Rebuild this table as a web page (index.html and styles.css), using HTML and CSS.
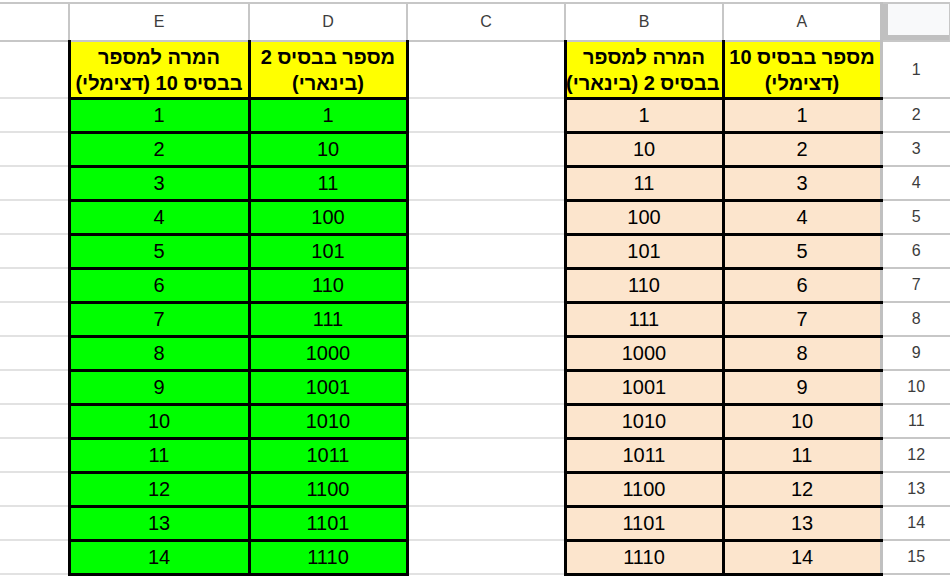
FILE: index.html
```html
<!DOCTYPE html>
<html lang="he">
<head>
<meta charset="utf-8">
<title>Sheet</title>
<link rel="stylesheet" href="styles.css">
</head>
<body>
<table class="sheet">
<colgroup>
<col class="w-f"><col class="w-e"><col class="w-d"><col class="w-c"><col class="w-b"><col class="w-a"><col class="w-rn">
</colgroup>
<thead>
<tr class="hdr">
<th class="ch first"></th><th class="ch">E</th><th class="ch">D</th><th class="ch">C</th><th class="ch">B</th><th class="ch">A</th><th class="corner"></th>
</tr>
</thead>
<tbody>
<tr class="r1">
<td class="first"></td>
<td class="t g title">המרה למספר<br>בבסיס 10 (דצימלי)</td>
<td class="t g title">מספר בבסיס 2<br>(בינארי)</td>
<td></td>
<td class="t p title">המרה למספר<br>בבסיס 2 (בינארי)</td>
<td class="t p title last">מספר בבסיס 10<br>(דצימלי)</td>
<td class="rn">1</td>
</tr>
<tr><td class="first"></td><td class="t g">1</td><td class="t g">1</td><td></td><td class="t p">1</td><td class="t p last">1</td><td class="rn">2</td></tr>
<tr><td class="first"></td><td class="t g">2</td><td class="t g">10</td><td></td><td class="t p">10</td><td class="t p last">2</td><td class="rn">3</td></tr>
<tr><td class="first"></td><td class="t g">3</td><td class="t g">11</td><td></td><td class="t p">11</td><td class="t p last">3</td><td class="rn">4</td></tr>
<tr><td class="first"></td><td class="t g">4</td><td class="t g">100</td><td></td><td class="t p">100</td><td class="t p last">4</td><td class="rn">5</td></tr>
<tr><td class="first"></td><td class="t g">5</td><td class="t g">101</td><td></td><td class="t p">101</td><td class="t p last">5</td><td class="rn">6</td></tr>
<tr><td class="first"></td><td class="t g">6</td><td class="t g">110</td><td></td><td class="t p">110</td><td class="t p last">6</td><td class="rn">7</td></tr>
<tr><td class="first"></td><td class="t g">7</td><td class="t g">111</td><td></td><td class="t p">111</td><td class="t p last">7</td><td class="rn">8</td></tr>
<tr><td class="first"></td><td class="t g">8</td><td class="t g">1000</td><td></td><td class="t p">1000</td><td class="t p last">8</td><td class="rn">9</td></tr>
<tr><td class="first"></td><td class="t g">9</td><td class="t g">1001</td><td></td><td class="t p">1001</td><td class="t p last">9</td><td class="rn">10</td></tr>
<tr><td class="first"></td><td class="t g">10</td><td class="t g">1010</td><td></td><td class="t p">1010</td><td class="t p last">10</td><td class="rn">11</td></tr>
<tr><td class="first"></td><td class="t g">11</td><td class="t g">1011</td><td></td><td class="t p">1011</td><td class="t p last">11</td><td class="rn">12</td></tr>
<tr><td class="first"></td><td class="t g">12</td><td class="t g">1100</td><td></td><td class="t p">1100</td><td class="t p last">12</td><td class="rn">13</td></tr>
<tr><td class="first"></td><td class="t g">13</td><td class="t g">1101</td><td></td><td class="t p">1101</td><td class="t p last">13</td><td class="rn">14</td></tr>
<tr><td class="first"></td><td class="t g">14</td><td class="t g">1110</td><td></td><td class="t p">1110</td><td class="t p last">14</td><td class="rn">15</td></tr>
</tbody>
</table>
</body>
</html>
```

FILE: styles.css
```css
html, body {
  margin: 0;
  padding: 0;
  background: #ffffff;
}

body {
  padding-top: 2px;
  overflow: hidden;
}

.sheet {
  border-collapse: collapse;
  table-layout: fixed;
  width: 950px;
  font-family: "Liberation Sans", Arial, sans-serif;
}

.w-f { width: 69px; }
.w-e { width: 180px; }
.w-d { width: 158px; }
.w-c { width: 158px; }
.w-b { width: 158px; }
.w-a { width: 158px; }
.w-rn { width: 69px; }

.sheet td,
.sheet th {
  padding: 0 2px;
  border: 2px solid #e2e2e2;
  text-align: center;
  vertical-align: middle;
  overflow: hidden;
  white-space: nowrap;
}

.sheet .first {
  border-left: none;
}

.hdr {
  height: 38px;
}

.sheet .ch {
  border: 2px solid #c7c7c7;
  font-weight: normal;
  font-size: 16px;
  color: #3c3c3c;
  background: #ffffff;
}

.sheet .ch.first {
  border-left: none;
}

.sheet .corner {
  background: #f8f9fa;
  border: 2px solid #c7c7c7;
  border-left: 3px solid #c0c0c0;
  box-shadow: inset 5px -5px 0 #c0c0c0;
}

.sheet tbody tr {
  height: 34px;
}

.sheet tbody tr.r1 {
  height: 57px;
}

.sheet .t {
  border: 3px solid #000000;
  font-size: 20px;
  color: #000000;
}

.sheet .r1 td {
  border-top: 2px solid #c7c7c7;
}

.sheet .t.last {
  border-right: 3px solid #c0c0c0;
}

.g {
  background: #00ff00;
}

.p {
  background: #fce5cd;
}

.sheet .title {
  background: #ffff00;
  font-weight: bold;
  line-height: 26px;
  direction: rtl;
  vertical-align: bottom;
  padding: 0 2px 1px;
}

.sheet .rn {
  border-left: 3px solid #c0c0c0;
  border-right: none;
  border-bottom: 2px solid #c7c7c7;
  border-top: 2px solid #c7c7c7;
  font-size: 16px;
  color: #3c3c3c;
}
```
